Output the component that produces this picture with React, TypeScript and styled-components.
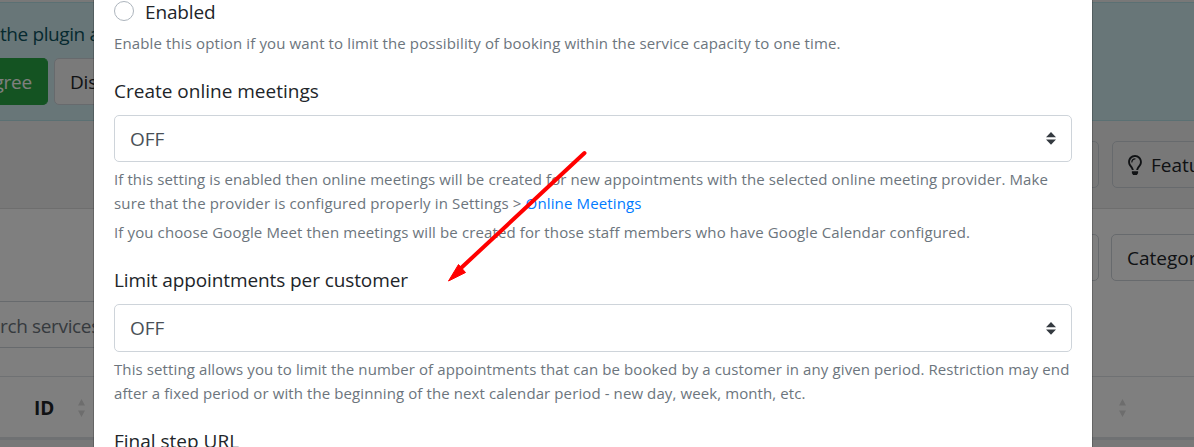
import React from 'react';
import styled, { createGlobalStyle } from 'styled-components';

const Global = createGlobalStyle`
  * { box-sizing: border-box; }
  body { margin: 0; background: #fff; overflow: hidden; }
`;

const Screen = styled.div`
  position: relative;
  width: 1194px;
  height: 447px;
  overflow: hidden;
  background: #fff;
  color: #212529;
  font-family: 'Open Sans', 'Noto Sans', sans-serif;
  font-size: 19px;
  line-height: 28px;
  white-space: nowrap;
`;

const Page = styled.div`
  height: 100%;
  display: flex;
  flex-direction: column;
  overflow: hidden;
`;

const TopArea = styled.div`
  height: 209px;
  flex: none;
  padding-top: 2px;
  background: #f1f1f1;
  border-bottom: 1px solid #dcdcdc;
`;

const Notice = styled.div`
  height: 119px;
  padding-top: 17px;
  background: #d1ecf1;
  border: solid #b6e0e7;
  border-width: 1px 0;
  color: #0c5460;
`;

const NoticeActions = styled.div`
  display: flex;
  gap: 6px;
  margin-top: 10px;
`;

const Button = styled.div<{ $w: number; $primary?: boolean; $end?: boolean; $pad?: number }>`
  flex: none;
  display: flex;
  align-items: center;
  justify-content: ${(p) => (p.$end ? 'flex-end' : 'flex-start')};
  width: ${(p) => p.$w}px;
  height: 47px;
  padding: 0 ${(p) => p.$pad ?? 15}px;
  border: 1px solid ${(p) => (p.$primary ? '#28a745' : '#ced4da')};
  border-radius: 5px;
  background: ${(p) => (p.$primary ? '#28a745' : 'transparent')};
  color: ${(p) => (p.$primary ? '#fff' : '#212529')};
`;

const PrimaryButton = styled(Button)`
  border-left: 0;
  border-radius: 0 5px 5px 0;
`;

const LightButton = styled(Button)`
  background: #f5f4f4;
  border-color: #ced4da;
`;

const Row = styled.div<{ $top: number; $gap: number }>`
  display: flex;
  gap: ${(p) => p.$gap}px;
  margin: ${(p) => p.$top}px 0 0 899px;
`;

const SearchField = styled.div`
  flex: none;
  width: 500px;
  height: 47px;
  margin-top: 20px;
  border: solid #ced4da;
  border-width: 1px 1px 1px 0;
  border-radius: 0 5px 5px 0;
  line-height: 48px;
  color: #6c757d;
`;

const TableHead = styled.div`
  flex: none;
  display: flex;
  align-items: center;
  height: 64px;
  margin-top: 28px;
  padding: 2px 68px 0 34px;
  border-top: 1px solid #dee2e6;
  border-bottom: 3px solid #dee2e6;
  font-weight: 700;
`;

const HeadLabel = styled.span`
  width: 44px;
`;

const Spacer = styled.span`
  flex: 1;
`;

const TableRow = styled.div`
  flex: 1;
  background: #f0f0f0;
`;

const Backdrop = styled.div`
  position: absolute;
  inset: 0;
  background: rgba(0, 0, 0, 0.5);
`;

const Modal = styled.div`
  position: absolute;
  top: -20px;
  bottom: -20px;
  left: 93px;
  width: 1000px;
  padding: 17px 20px 0;
  background: #fff;
  background-clip: padding-box;
  border: 1px solid rgba(0, 0, 0, 0.2);
`;

const Option = styled.div`
  display: flex;
  align-items: center;
  gap: 11px;
  height: 28px;
`;

const Radio = styled.span`
  width: 20px;
  height: 20px;
  margin-bottom: 2px;
  border: 1px solid #adb5bd;
  border-radius: 50%;
`;

const Text = styled.span<{ $ls?: number }>`
  letter-spacing: ${(p) => p.$ls ?? 0}px;
`;

const Help = styled.div<{ $top: number }>`
  margin-top: ${(p) => p.$top}px;
  font-size: 15px;
  line-height: 24px;
  color: #6c757d;
`;

const Link = styled.a`
  color: #007bff;
`;

const Label = styled.div`
  margin-top: 22px;
  height: 28px;
`;

const Select = styled.div<{ $h: number }>`
  display: flex;
  align-items: center;
  justify-content: space-between;
  width: 958px;
  height: ${(p) => p.$h}px;
  margin-top: 10px;
  padding: 0 15px;
  border: 1px solid #ced4da;
  border-radius: 5px;
  color: #495057;
`;

const Arrow = styled.svg`
  position: absolute;
  left: 440px;
  top: 140px;
`;

const BulbIcon = styled.svg`
  margin-right: 9px;
`;

const Caret = () => (
  <svg width="10" height="13" viewBox="0 0 10 13" fill="#343a40">
    <path d="M0 5.2 5 0l5 5.2zM0 7.6h10L5 12.8z" />
  </svg>
);

const Sort = () => (
  <svg width="7" height="18" viewBox="0 0 7 18" fill="#dadada">
    <path d="M0 6.500 3.500 0 7 6.500zM0 11.500h7L3.500 18z" />
  </svg>
);

const Bulb = () => (
  <BulbIcon width="14" height="20" viewBox="0 0 352 512" fill="#212529">
    <path d="M176 80c-52.940 0-96 43.060-96 96 0 8.840 7.160 16 16 16s16-7.160 16-16c0-35.300 28.720-64 64-64 8.840 0 16-7.160 16-16s-7.160-16-16-16zM96.060 459.170c0 3.150.930 6.220 2.680 8.840l24.510 36.840c2.970 4.460 7.970 7.140 13.320 7.140h78.850c5.360 0 10.360-2.680 13.320-7.140l24.510-36.840c1.740-2.620 2.670-5.700 2.680-8.840l.050-43.180H96.020l.040 43.180zM176 0C73.720 0 0 82.970 0 176c0 44.370 16.450 84.850 43.560 115.780 16.640 18.990 42.740 58.800 52.420 92.160v.060h48v-.120c-.010-4.770-.720-9.510-2.150-14.070-5.590-17.810-22.820-64.770-62.170-109.670-20.540-23.430-31.520-53.150-31.610-84.140-.200-73.640 59.670-128 127.950-128 70.580 0 128 57.420 128 128 0 30.970-11.240 60.850-31.650 84.140-39.110 44.610-56.420 91.470-62.100 109.460a47.507 47.507 0 0 0-2.220 14.300v.100h48v-.050c9.680-33.370 35.780-73.180 52.420-92.160C335.550 260.850 352 220.370 352 176 352 78.800 273.200 0 176 0z" />
  </BulbIcon>
);

export default function App() {
  return (
    <Screen>
      <Global />
      <Page>
        <TopArea>
          <Notice>
            <Text $ls={-0.4}>the plugin a</Text>
            <NoticeActions>
              <PrimaryButton $w={48} $primary $end $pad={15}>
                <Text $ls={-0.2}>gree</Text>
              </PrimaryButton>
              <LightButton $w={120}>
                <Text $ls={-0.2}>Dis</Text>
              </LightButton>
            </NoticeActions>
          </Notice>
          <Row $top={20} $gap={13}>
            <Button $w={200} />
            <Button $w={160}>
              <Bulb />
              <Text>Features</Text>
            </Button>
          </Row>
        </TopArea>
        <Row $top={25} $gap={12}>
          <Button $w={200} />
          <Button $w={160}>
            <Text>Categories</Text>
          </Button>
        </Row>
        <SearchField>
          <Text $ls={-0.35}>rch services</Text>
        </SearchField>
        <TableHead>
          <HeadLabel>ID</HeadLabel>
          <Sort />
          <Spacer />
          <Sort />
        </TableHead>
        <TableRow />
      </Page>
      <Backdrop />
      <Modal>
        <Option>
          <Radio />
          <Text $ls={-0.15}>Enabled</Text>
        </Option>
        <Help $top={5}>
          <Text $ls={0.125}>Enable this option if you want to limit the possibility of booking within the service capacity to one time.</Text>
        </Help>
        <Label>
          <Text>Create online meetings</Text>
        </Label>
        <Select $h={47}>
          <Text>OFF</Text>
          <Caret />
        </Select>
        <Help $top={5}>
          <Text $ls={0.095}>If this setting is enabled then online meetings will be created for new appointments with the selected online meeting provider. Make</Text>
          <br />
          <Text $ls={0.14}>
            sure that the provider is configured properly in Settings &gt; <Link>Online Meetings</Link>
          </Text>
        </Help>
        <Help $top={5}>
          <Text $ls={0.12}>If you choose Google Meet then meetings will be created for those staff members who have Google Calendar configured.</Text>
        </Help>
        <Label>
          <Text $ls={-0.1}>Limit appointments per customer</Text>
        </Label>
        <Select $h={48}>
          <Text>OFF</Text>
          <Caret />
        </Select>
        <Help $top={5}>
          <Text $ls={0.105}>This setting allows you to limit the number of appointments that can be booked by a customer in any given period. Restriction may end</Text>
          <br />
          <Text $ls={0.1}>after a fixed period or with the beginning of the next calendar period - new day, week, month, etc.</Text>
        </Help>
        <Label>
          <Text>Final step URL</Text>
        </Label>
      </Modal>
      <Arrow width="160" height="150" viewBox="0 0 160 150">
        <path d="M144.500 13 20 129" stroke="#f00" strokeWidth="4" strokeLinecap="round" />
        <path d="M8.500 141 18.500 124.500 25.500 132.500z" fill="#f00" stroke="#f00" />
      </Arrow>
    </Screen>
  );
}
